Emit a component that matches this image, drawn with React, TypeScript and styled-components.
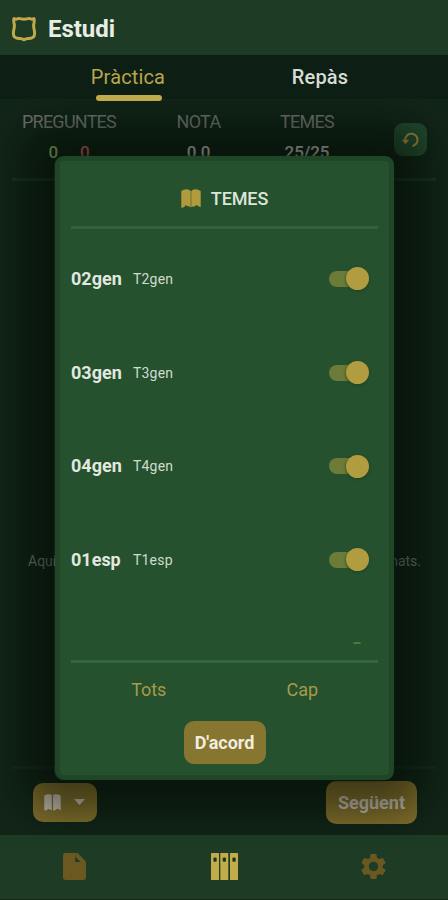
import React from "react";
import styled, { createGlobalStyle } from "styled-components";
import { MdSettings } from "react-icons/md";

const GlobalStyle = createGlobalStyle`
  * { box-sizing: border-box; }
  body { margin: 0; background: #1d3a24; font-family: Roboto, "Liberation Sans", sans-serif; }
  button { font: inherit; border: 0; padding: 0; background: none; }
  svg { display: block; flex: none; }
`;

const Screen = styled.div`
  position: relative;
  width: 448px;
  height: 900px;
  display: flex;
  flex-direction: column;
  overflow: hidden;
`;

const Header = styled.header`
  height: 55px;
  flex: none;
  display: flex;
  align-items: center;
  gap: 11px;
  padding: 3px 0 0 11px;
  background: #1e3c25;
`;

const Title = styled.h1`
  margin: 0;
  font-size: 24px;
  line-height: 28px;
  font-weight: 700;
  letter-spacing: -0.05px;
  color: #e9eee5;
`;

const Tabs = styled.nav`
  height: 44px;
  flex: none;
  display: grid;
  grid-template-columns: 192px 192px;
  justify-content: center;
  background: #0d1f14;
  position: relative;
  z-index: 2;
`;

const Tab = styled.button<{ $active?: boolean }>`
  display: flex;
  flex-direction: column;
  align-items: center;
  padding-top: 10px;
  height: 48px;
  font-size: 20px;
  line-height: 24px;
  letter-spacing: 0.15px;
  font-weight: ${(p) => (p.$active ? 400 : 500)};
  color: ${(p) => (p.$active ? "#b8a64d" : "#d8dcd6")};
  &::after {
    content: "";
    width: 66px;
    height: 6px;
    margin: 6px 0 0 1px;
    border-radius: 3px;
    background: ${(p) => (p.$active ? "#c0aa4b" : "transparent")};
  }
`;

const Content = styled.main`
  flex: 1;
  display: flex;
  flex-direction: column;
  padding: 0 12px;
  background: #122618;
`;

const Stats = styled.section`
  height: 82px;
  flex: none;
  display: grid;
  grid-template-columns: 114px 145px 72px 1fr;
  padding-top: 11px;
  border-bottom: 3px solid #193422;
`;

const Stat = styled.div`
  display: flex;
  flex-direction: column;
  align-items: center;
  gap: 7px;
`;

const StatLabel = styled.span`
  font-size: 18px;
  line-height: 24px;
  letter-spacing: -0.75px;
  color: #707871;
`;

const StatValue = styled.span`
  display: flex;
  gap: 22px;
  font-size: 17px;
  line-height: 22px;
  font-weight: 500;
  letter-spacing: -0.1px;
  color: #c2c6c0;
`;

const Count = styled.span<{ $wrong?: boolean }>`
  color: ${(p) => (p.$wrong ? "#c86466" : "#92ba6c")};
`;

const ResetButton = styled.button`
  justify-self: end;
  margin: 13px 9px 0 0;
  width: 33px;
  height: 33px;
  border-radius: 9px;
  background: #234c30;
  color: #a68d3d;
  display: grid;
  place-items: center;
`;

const EmptyArea = styled.section`
  flex: 1;
  padding: 370px 15px 0 16px;
`;

const EmptyText = styled.p`
  margin: 0;
  display: flex;
  justify-content: space-between;
  font-size: 14px;
  line-height: 20px;
  color: #767f77;
`;

const Actions = styled.footer`
  height: 69px;
  flex: none;
  display: flex;
  justify-content: space-between;
  align-items: center;
  padding: 0 19px 0 21px;
  border-top: 3px solid #162d1e;
`;

const MutedButton = styled.button<{ $wide?: boolean }>`
  display: flex;
  align-items: center;
  justify-content: center;
  gap: 13px;
  width: ${(p) => (p.$wide ? 91 : 64)}px;
  height: ${(p) => (p.$wide ? 43 : 39)}px;
  padding-right: ${(p) => (p.$wide ? 0 : 2)}px;
  border-radius: 10px;
  background: #85732e;
  color: #cbc2b7;
  font-size: 18px;
  font-weight: 700;
`;

const BottomNav = styled.nav`
  height: 65px;
  flex: none;
  display: grid;
  grid-template-columns: repeat(3, 149.5px);
  place-items: center;
  padding-bottom: 2px;
  background: linear-gradient(#1b3a24, #1e3b25 30%);
  border-bottom: 1px solid #142819;
  color: #69581f;
`;

const ModalLayer = styled.div`
  position: absolute;
  inset: 99px 0 0;
  display: flex;
  align-items: flex-start;
  justify-content: center;
  padding: 57px 0 0 1px;
  overflow: hidden;
`;

const Shade = styled.div`
  position: absolute;
  inset: 0 0 65px;
  overflow: hidden;
  &::after {
    content: "";
    position: absolute;
    inset: 57px 54px 55px;
    border-radius: 8px;
    box-shadow: 0 0 44px 34px rgba(0, 6, 2, 0.52);
  }
`;

const Dialog = styled.section`
  position: relative;
  width: 339px;
  height: 624px;
  display: flex;
  flex-direction: column;
  padding: 0 11px;
  border: 5px solid #1e4627;
  border-radius: 9px;
  background: #25512f;
  box-shadow: 0 0 3px #0b2012;
`;

const DialogTitle = styled.h2`
  height: 68px;
  flex: none;
  margin: 0;
  padding: 9px 0 0;
  display: flex;
  align-items: center;
  justify-content: center;
  gap: 10px;
  border-bottom: 3px solid #31643e;
  font-size: 18px;
  font-weight: 500;
  letter-spacing: -0.1px;
  color: #dce5d9;
`;

const TitleIcon = styled.span`
  color: #b19a3b;
`;

const TopicList = styled.div`
  height: 431px;
  flex: none;
  overflow: hidden;
  padding-top: 3px;
`;

const TopicRow = styled.div`
  height: 93.7px;
  display: flex;
  align-items: center;
  padding-right: 9px;
`;

const TopicCode = styled.strong`
  width: 62px;
  font-size: 18px;
  line-height: 24px;
  color: #e1e8df;
`;

const TopicName = styled.span`
  flex: 1;
  font-size: 14px;
  line-height: 20px;
  letter-spacing: 0.2px;
  color: #d0dccd;
`;

const Toggle = styled.button`
  width: 40px;
  height: 23px;
  display: flex;
  align-items: center;
`;

const ToggleTrack = styled.span`
  width: 34px;
  height: 16px;
  margin-right: -17px;
  border-radius: 8px;
  background: #6c7b37;
`;

const ToggleThumb = styled.span`
  position: relative;
  width: 23px;
  height: 23px;
  border-radius: 50%;
  background: #b19c40;
  box-shadow: 0 1px 3px #1c4426;
`;

const NextSwitchEdge = styled.div`
  width: 8px;
  height: 2px;
  border-radius: 2px 2px 0 0;
  background: #55783d;
  margin: 35px 17px 0 auto;
`;

const BulkActions = styled.div`
  height: 61px;
  flex: none;
  display: grid;
  grid-template-columns: 1fr 1fr;
  border-top: 3px solid #31683e;
`;

const LinkButton = styled.button`
  height: 53px;
  padding-left: 2px;
  font-size: 18px;
  letter-spacing: -0.1px;
  color: #a79b48;
`;

const ConfirmButton = styled.button`
  align-self: center;
  width: 82px;
  height: 43px;
  border-radius: 10px;
  background: #877630;
  color: #f0ecdf;
  font-size: 18px;
  font-weight: 700;
  letter-spacing: -0.05px;
`;

const ShieldIcon = () => (
  <svg width="26" height="28" viewBox="0 0 26 28" fill="none" stroke="#c0a94b" strokeWidth="3" strokeLinejoin="round">
    <path d="M3 3.6c1.5.8 3 .8 4.4-.2 3.6 1 7.6 1 11.2 0 1.4 1 2.9 1 4.4.2 1.2 2.6-.5 4.4-.4 7.4.2 2.8 1.2 5 1 8-.2 3.4-3 4.5-6.1 4.4-2.1 0-3.4.4-4.5 1.4-1.1-1-2.4-1.5-4.5-1.4-3.1.1-5.9-1-6.1-4.4-.2-3 .8-5.2 1-8 .1-3-1.6-4.8-.4-7.4Z" />
  </svg>
);

const BookIcon = () => (
  <svg width="20" height="19" viewBox="0 0 20 19" fill="currentColor">
    <path d="M.3 2Q5-1.2 9.3 1.6V18.3L8 17.2H6.3L4.8 16 3 18.3.3 18.7Z" />
    <path d="M10.7 1.6Q15-1.2 19.7 2V18.3L17 16.9 15.3 16 13.5 17.5H11.7L10.7 18.3Z" />
    <path d="M9 2h2v16H9z" opacity=".65" />
  </svg>
);

const BookmarksIcon = () => (
  <svg width="17" height="17" viewBox="0 0 17 17" fill="currentColor">
    <path d="M.3 1.5Q4-.3 7.8.7V16.5L5.5 15.2 4 15 2.7 16.3.3 16.5Z" />
    <path d="M9.1.7Q13-.3 16.7 1.5V16.5L14.7 15 13 14.7 11 16.3 9.1 16.5Z" />
  </svg>
);

const ResetIcon = () => (
  <svg width="20" height="18" viewBox="0 0 20 18">
    <path d="M4.3 10.2A6.2 6.2 0 1 1 11.4 15" fill="none" stroke="currentColor" strokeWidth="2" />
    <path d="M.8 8.8H8.2L4.5 13.2Z" fill="currentColor" />
  </svg>
);

const CaretIcon = () => (
  <svg width="11" height="6" viewBox="0 0 11 6"><path d="M0 0H11L5.5 6Z" fill="currentColor" /></svg>
);

const FileIcon = () => (
  <svg width="23" height="27" viewBox="0 0 23 27" fill="currentColor">
    <path d="M2.4 0H12.2V9H22L23 10V24Q23 27 20.5 27H2.4Q0 27 0 24.6V2.4Q0 0 2.4 0Z" />
    <path d="M12.2 0H14.6L22.8 8.4V10H18.4L12.2 3.6Z" />
  </svg>
);

const BindersIcon = () => (
  <svg width="27" height="27" viewBox="0 0 27 27">
    {[0, 9.3, 19].map((x) => (
      <g key={x}>
        <rect x={x} width="8" height="27" rx=".6" fill="#c1ac49" />
        <rect x={x + 2.4} y="4.4" width="3.3" height="4.4" rx="1.2" fill="#1d3524" />
      </g>
    ))}
  </svg>
);

const topics = [
  { code: "02gen", name: "T2gen" },
  { code: "03gen", name: "T3gen" },
  { code: "04gen", name: "T4gen" },
  { code: "01esp", name: "T1esp" },
];

export default function App() {
  return (
    <Screen>
      <GlobalStyle />
      <Header>
        <ShieldIcon />
        <Title>Estudi</Title>
      </Header>
      <Tabs>
        <Tab $active>Pràctica</Tab>
        <Tab>Repàs</Tab>
      </Tabs>
      <Content>
        <Stats>
          <Stat>
            <StatLabel>PREGUNTES</StatLabel>
            <StatValue><Count>0</Count><Count $wrong>0</Count></StatValue>
          </Stat>
          <Stat>
            <StatLabel>NOTA</StatLabel>
            <StatValue>0.0</StatValue>
          </Stat>
          <Stat>
            <StatLabel>TEMES</StatLabel>
            <StatValue>25/25</StatValue>
          </Stat>
          <ResetButton aria-label="Reinicia"><ResetIcon /></ResetButton>
        </Stats>
        <EmptyArea>
          <EmptyText><span>Aquí</span><span>seleccionats.</span></EmptyText>
        </EmptyArea>
        <Actions>
          <MutedButton aria-label="Temes"><BookmarksIcon /><CaretIcon /></MutedButton>
          <MutedButton $wide>Següent</MutedButton>
        </Actions>
      </Content>
      <BottomNav>
        <FileIcon />
        <BindersIcon />
        <MdSettings size={31} />
      </BottomNav>
      <ModalLayer>
        <Shade />
        <Dialog role="dialog" aria-label="Temes">
          <DialogTitle>
            <TitleIcon><BookIcon /></TitleIcon>
            TEMES
          </DialogTitle>
          <TopicList>
            {topics.map((t) => (
              <TopicRow key={t.code}>
                <TopicCode>{t.code}</TopicCode>
                <TopicName>{t.name}</TopicName>
                <Toggle aria-label={t.name}><ToggleTrack /><ToggleThumb /></Toggle>
              </TopicRow>
            ))}
            <NextSwitchEdge />
          </TopicList>
          <BulkActions>
            <LinkButton>Tots</LinkButton>
            <LinkButton>Cap</LinkButton>
          </BulkActions>
          <ConfirmButton>D'acord</ConfirmButton>
        </Dialog>
      </ModalLayer>
    </Screen>
  );
}
